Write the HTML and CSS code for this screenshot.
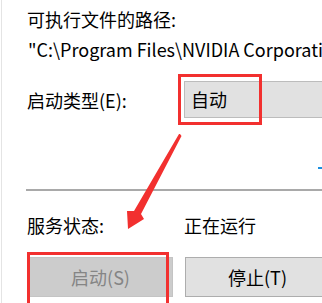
FILE: index.html
```html
<!DOCTYPE html>
<html>
<head>
<meta charset="utf-8">
<link rel="stylesheet" href="styles.css">
</head>
<body>
<div class="panel">
  <div class="path-label">可执行文件的路径:</div>
  <div class="path-value">"C:\Program Files\NVIDIA Corporation\Display.NvContainer\NVDisplay.Container.exe"</div>
  <div class="row startup">
    <div class="label">启动类型(E):</div>
    <div class="combo">自动</div>
  </div>
  <div class="link-row"><span class="link-mark"></span></div>
  <div class="sep"></div>
  <div class="row status">
    <div class="label">服务状态:</div>
    <div class="value">正在运行</div>
  </div>
  <div class="buttons">
    <div class="btn disabled">启动(S)</div>
    <div class="btn">停止(T)</div>
  </div>
  <div class="mark mark-combo"></div>
  <div class="mark mark-start"></div>
  <svg class="arrow" width="322" height="303" viewBox="0 0 322 303">
    <polygon points="180,134 181.5,136 141,214 144,219 128,229 127,211 134,211 179,134" fill="#f2302f"/>
  </svg>
</div>
</body>
</html>
```

FILE: styles.css
```css
html, body {
  margin: 0;
  padding: 0;
  background: #ffffff;
  overflow: hidden;
}
body {
  width: 322px;
  height: 303px;
  font-family: "Noto Sans CJK SC", "Noto Sans", sans-serif;
  font-size: 18px;
  color: #000000;
}
.panel {
  position: relative;
  height: 303px;
  margin-left: 1px;
  border-left: 1px solid #e4e4e4;
  padding-left: 25px;
  box-sizing: border-box;
  overflow: hidden;
}
.path-label {
  padding-top: 7px;
  line-height: 24px;
  white-space: nowrap;
}
.path-value {
  margin-top: 6px;
  line-height: 24px;
  white-space: nowrap;
  margin-left: 1px;
  overflow: hidden;
}
.row {
  display: flex;
  align-items: center;
  white-space: nowrap;
}
.startup {
  margin-top: 20px;
  height: 37px;
}
.label {
  width: 156px;
  flex: none;
}
.combo {
  flex: none;
  width: 160px;
  height: 37px;
  box-sizing: border-box;
  background: #e1e1e1;
  border: 1px solid #bcbcbc;
  border-right: none;
  padding-left: 6px;
  line-height: 35px;
  margin-left: 1px;
}
.link-row {
  height: 71px;
  position: relative;
}
.link-mark {
  position: absolute;
  left: 291px;
  top: 49px;
  width: 4px;
  height: 2px;
  background: #1a8fe0;
}
.sep {
  height: 0;
  border-top: 2px solid #a9a9a9;
  margin-left: -1px;
}
.status {
  margin-top: 22px;
  height: 24px;
}
.status .value {
  margin-left: 1px;
}
.buttons {
  display: flex;
  gap: 12px;
  margin-top: 20px;
  margin-left: 1px;
}
.btn {
  flex: none;
  width: 145px;
  height: 40px;
  box-sizing: border-box;
  border: 1px solid #adadad;
  background: #e1e1e1;
  text-align: center;
  line-height: 38px;
  color: #000000;
}
.btn.disabled {
  background: #cccccc;
  border-color: #c4c4c4;
  color: #858585;
}
.mark {
  position: absolute;
  border: 3px solid #f2302f;
  box-sizing: border-box;
}
.mark-combo {
  left: 176px;
  top: 74px;
  width: 84px;
  height: 51px;
}
.mark-start {
  left: 25px;
  top: 252px;
  width: 142px;
  height: 60px;
}
.arrow {
  position: absolute;
  left: -2px;
  top: 0;
  pointer-events: none;
}
```
